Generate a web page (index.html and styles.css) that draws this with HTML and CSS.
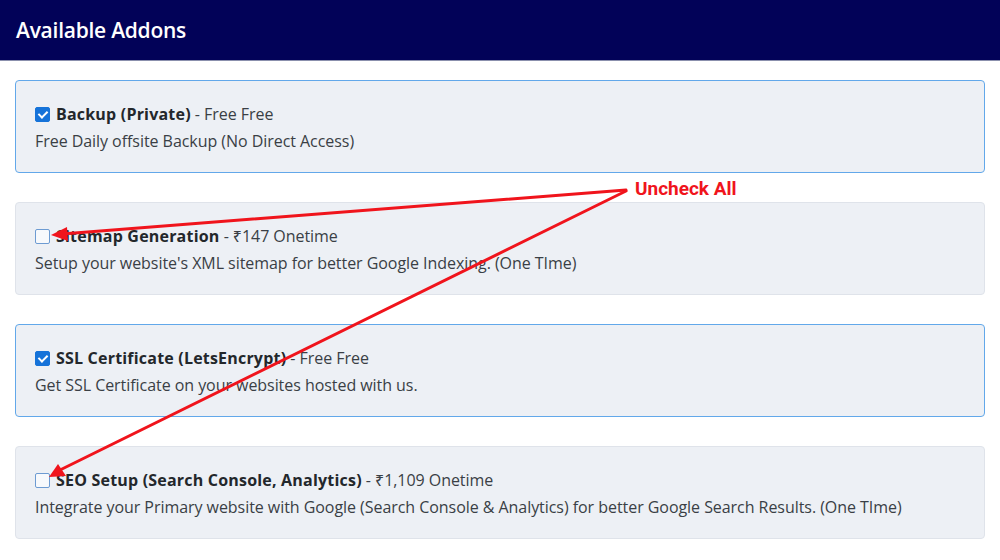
FILE: index.html
```html
<!DOCTYPE html>
<html lang="en">
<head>
    <meta charset="UTF-8">
    <meta name="viewport" content="width=device-width, initial-scale=1.0">
    <title>Available Addons</title>
    <link rel="stylesheet" href="styles.css">
</head>
<body>
    <header class="topbar">
        <h1>Available Addons</h1>
    </header>

    <main class="addons">
        <label class="addon selected">
            <span class="addon-title">
                <span class="box checked"></span>
                <strong>Backup (Private)</strong>&nbsp;- Free Free
            </span>
            <span class="addon-desc">Free Daily offsite Backup (No Direct Access)</span>
        </label>

        <label class="addon">
            <span class="addon-title">
                <span class="box"></span>
                <strong>Sitemap Generation</strong>&nbsp;- ₹147 Onetime
            </span>
            <span class="addon-desc">Setup your website's XML sitemap for better Google Indexing. (One TIme)</span>
        </label>

        <label class="addon selected">
            <span class="addon-title">
                <span class="box checked"></span>
                <strong>SSL Certificate (LetsEncrypt)</strong>&nbsp;- Free Free
            </span>
            <span class="addon-desc">Get SSL Certificate on your websites hosted with us.</span>
        </label>

        <label class="addon">
            <span class="addon-title">
                <span class="box"></span>
                <strong>SEO Setup (Search Console, Analytics)</strong>&nbsp;- ₹1,109 Onetime
            </span>
            <span class="addon-desc">Integrate your Primary website with Google (Search Console &amp; Analytics) for better Google Search Results. (One TIme)</span>
        </label>
    </main>

    <!-- annotation drawn over the page -->
    <div class="note">Uncheck All</div>
    <svg class="arrows" width="1000" height="560" viewBox="0 0 1000 560">
        <g stroke="#f0141c" stroke-width="3" fill="none" stroke-linecap="round">
            <line x1="626" y1="190" x2="62" y2="234"/>
            <line x1="626" y1="191" x2="60" y2="470"/>
        </g>
        <g fill="#f0141c">
            <polygon points="51,235 67,227 68,241"/>
            <polygon points="49,477 58,464 66,476"/>
        </g>
    </svg>
</body>
</html>
```

FILE: styles.css
```css
body {
    margin: 0;
    font-family: "Open Sans", "Noto Sans", Arial, sans-serif;
    background: #fff;
    color: #3a3f45;
}
.topbar {
    height: 60px;
    background-color: #020258;
    border-bottom: 1px solid #8b90ad;
    display: flex;
    align-items: center;
    padding: 0 16px;
}
.topbar h1 {
    margin: 0 0 1px;
    color: #fff;
    font-size: 21px;
    font-weight: 600;
    letter-spacing: -0.25px;
}
.addons {
    display: flex;
    flex-direction: column;
    gap: 29px;
    padding: 19px 15px 0;
}
.addon {
    display: flex;
    flex-direction: column;
    height: 93px;
    box-sizing: border-box;
    padding: 20px 19px 0;
    background-color: #edf0f5;
    border: 1px solid #dfe3ea;
    border-radius: 4px;
    font-size: 16px;
    line-height: 27px;
    letter-spacing: -0.05px;
}
.addon.selected {
    border-color: #62a8ea;
}
.addon-title {
    display: flex;
    align-items: center;
}
.addon-title strong {
    font-weight: 700;
    color: #23272b;
    letter-spacing: 0.2px;
}
.box {
    width: 15px;
    height: 15px;
    box-sizing: border-box;
    border: 1.5px solid #6d9bd2;
    border-radius: 2px;
    background: #f7f9fc;
    margin-right: 6px;
    position: relative;
}
.box.checked {
    background: #1673d9;
    border-color: #1673d9;
}
.box.checked::after {
    content: "";
    position: absolute;
    left: 3.5px;
    top: 1px;
    width: 4px;
    height: 7px;
    border: solid #fff;
    border-width: 0 2px 2px 0;
    transform: rotate(45deg);
}
.note {
    position: absolute;
    left: 635px;
    top: 177px;
    color: #f0141c;
    font-family: Roboto, Arial, sans-serif;
    font-weight: 700;
    font-size: 19px;
}
.arrows {
    position: absolute;
    left: 0;
    top: 0;
    pointer-events: none;
}
```
